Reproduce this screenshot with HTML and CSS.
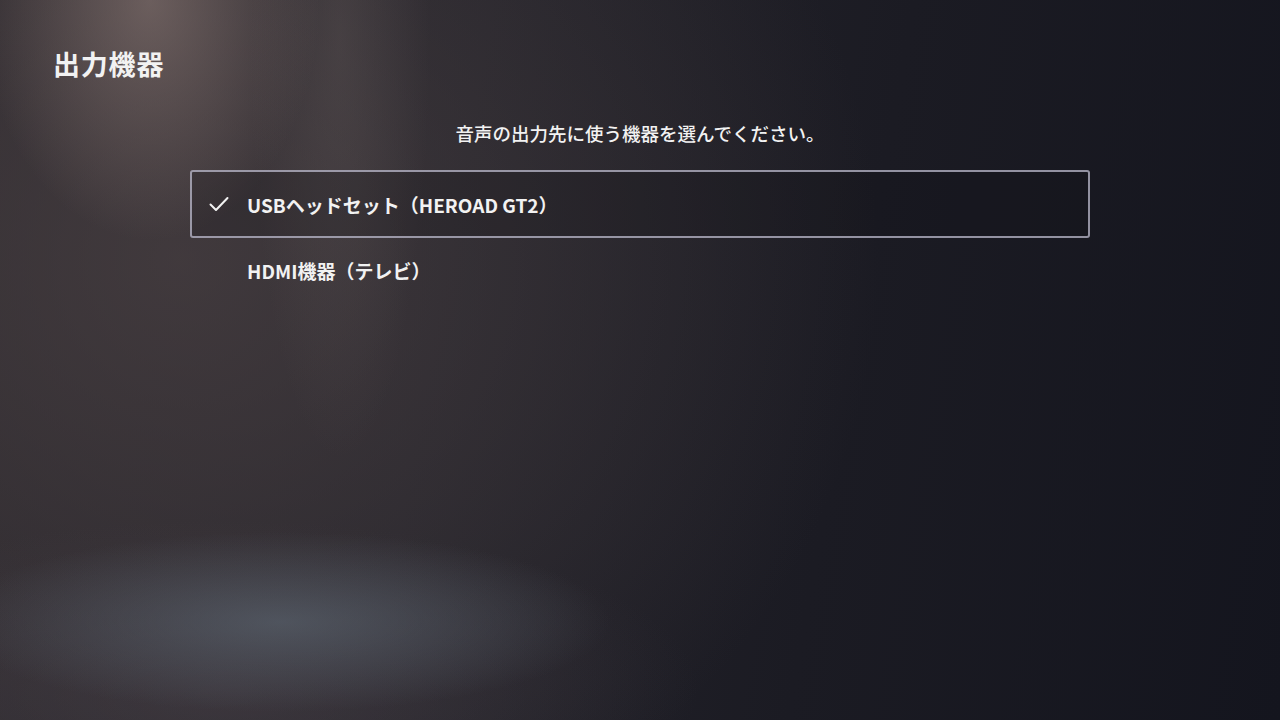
FILE: index.html
```html
<!DOCTYPE html>
<html lang="ja">
<head>
  <meta charset="UTF-8">
  <title>出力機器</title>
  <link rel="stylesheet" href="styles.css">
</head>
<body>

  <div class="header">
    <h1>出力機器</h1>
  </div>

  <div class="content">
    <p class="prompt">音声の出力先に使う機器を選んでください。</p>

    <ul class="device-list">
      <li class="device selected">
        <span class="check">
          <svg width="20" height="16" viewBox="0 0 20 16">
            <polyline points="1.5,8.5 7,14 18.5,2" fill="none" stroke="#f2f2f2" stroke-width="2" stroke-linecap="round" stroke-linejoin="round"/>
          </svg>
        </span>
        <span class="name">USBヘッドセット（HEROAD GT2）</span>
      </li>
      <li class="device">
        <span class="check"></span>
        <span class="name">HDMI機器（テレビ）</span>
      </li>
    </ul>
  </div>

</body>
</html>
```

FILE: styles.css
```css
html, body {
  height: 100%;
}
body {
  margin: 0;
  overflow: hidden;
  font-family: "Noto Sans CJK JP", "Noto Sans", sans-serif;
  color: #f2f2f2;
  background:
    radial-gradient(ellipse 170px 240px at 150px 0px, rgba(150, 130, 125, 0.55), rgba(150, 130, 125, 0) 100%),
    radial-gradient(ellipse 90px 420px at 340px 40px, rgba(130, 118, 115, 0.22), rgba(130, 118, 115, 0) 100%),
    radial-gradient(ellipse 330px 90px at 280px 622px, rgba(95, 106, 118, 0.6), rgba(95, 106, 118, 0) 100%),
    radial-gradient(ellipse 480px 170px at 220px 690px, rgba(80, 72, 80, 0.4), rgba(80, 72, 80, 0) 100%),
    radial-gradient(ellipse 700px 650px at 180px 260px, rgba(78, 68, 70, 0.65), rgba(78, 68, 70, 0) 100%),
    linear-gradient(100deg, #2b282d 0%, #24232a 35%, #1b1b23 65%, #14151e 100%);
}

.header {
  padding: 42px 0 0 53px;
}
.header h1 {
  margin: 0;
  font-size: 27px;
  font-weight: 700;
  line-height: 44px;
  letter-spacing: 0.8px;
}

.content {
  width: 900px;
  margin: 0 auto;
}
.prompt {
  margin: 33px 0 0;
  text-align: center;
  font-size: 18.5px;
  font-weight: 500;
  line-height: 28px;
}

.device-list {
  list-style: none;
  margin: 23px 0 0;
  padding: 0;
}
.device {
  display: flex;
  align-items: center;
  height: 64px;
  border: 2px solid transparent;
  border-radius: 3px;
  font-size: 19px;
  font-weight: 700;
}
.device + .device {
  margin-top: -2px;
}
.device.selected {
  border-color: rgba(190, 188, 205, 0.75);
  background: rgba(14, 14, 22, 0.2);
}
.check {
  display: flex;
  width: 20px;
  margin: 0 18px 0 17px;
}
```
